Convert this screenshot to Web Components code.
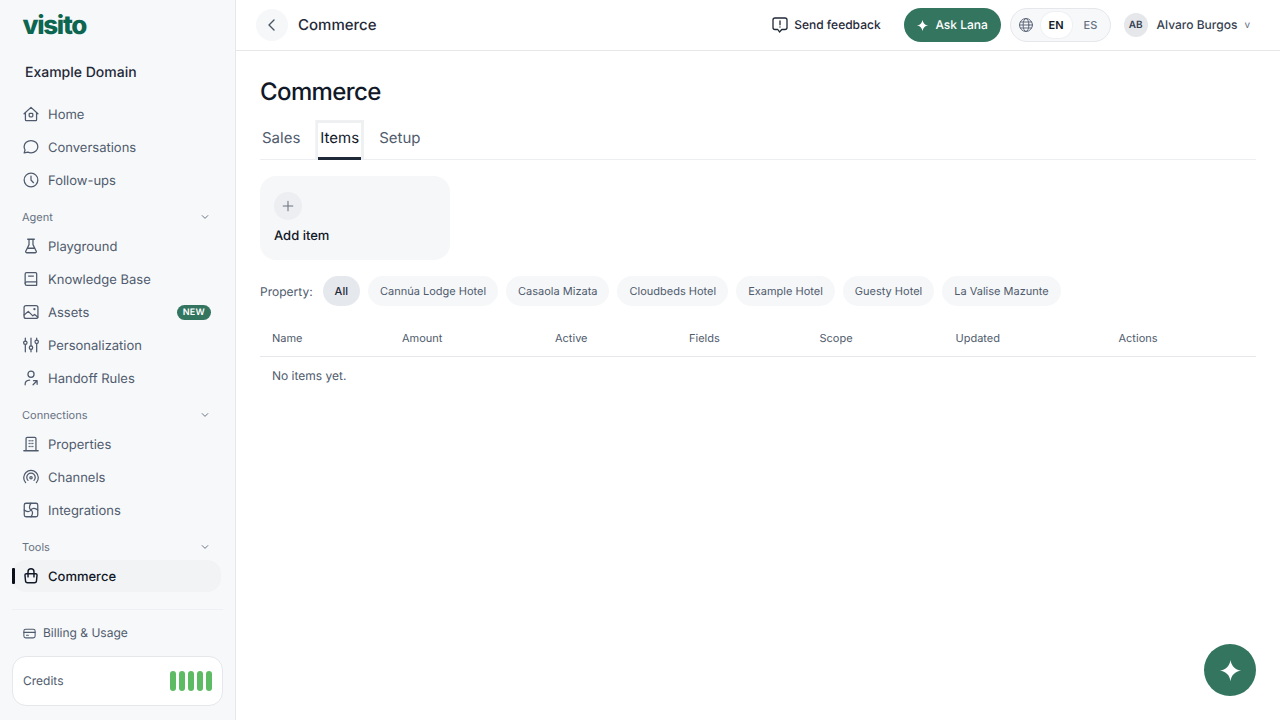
<!DOCTYPE html>
<html lang="en"><head><meta charset="utf-8"><title>Commerce</title>
<style>
html,body{margin:0;height:100%;overflow:hidden}
body{font-family:Inter,"Noto Sans",sans-serif;color:#111827;background:#fff;text-rendering:geometricPrecision}
</style></head><body>
<app-shell>
  <side-bar slot="side"></side-bar>
  <top-bar slot="top"></top-bar>
  <commerce-page slot="main"></commerce-page>
</app-shell>
<fab-button></fab-button>
<script>
const ICONS={
home:'<path d="M2.300 9.800 10 2.600l7.700 7.200M3.800 8.600V16.300a1 1 0 0 0 1 1h10.400a1 1 0 0 0 1-1V8.600"/><rect x="8" y="9.200" width="4" height="4" rx=".9"/>',
chat:'<path d="M10 2.800c4.200 0 7.600 3 7.600 6.800s-3.400 6.800-7.600 6.800c-1.200 0-2.300-.2-3.300-.7l-4.300.9 1-3.300A6.400 6.400 0 0 1 2.400 9.600c0-3.800 3.400-6.800 7.600-6.800z"/>',
clock:'<circle cx="10" cy="10" r="7.600"/><path d="M10 5.600V10l2.800 3"/>',
flask:'<path d="M6.300 2.500h7.400M7.800 2.500v6L4.200 15.800a1.100 1.100 0 0 0 1 1.700h9.600a1.100 1.100 0 0 0 1-1.700L12.200 8.500v-6M6.300 12.500h7.400"/>',
book:'<path d="M5 3h10a1.300 1.300 0 0 1 1.300 1.300V17H5.300a1.800 1.800 0 0 1-1.800-1.800V4.500A1.500 1.500 0 0 1 5 3z"/><path d="M3.500 14.800c0-1 .7-1.500 1.800-1.500h11M7.300 6.800h5.400"/>',
image:'<rect x="2.300" y="2.800" width="15.400" height="14.400" rx="2.200"/><path d="M2.300 13.300 7 9.300l5 5 2-1.500 3.700 3"/><circle cx="13.800" cy="6.800" r=".6"/>',
sliders:'<path d="M3.700 2.500v3M3.700 9.500v8M10 2.500v8.500M10 15v2.500M16.300 2.500v2M16.300 8.500v9"/><circle cx="3.700" cy="7.500" r="1.900"/><circle cx="10" cy="13" r="1.900"/><circle cx="16.300" cy="6.500" r="1.900"/>',
handoff:'<circle cx="10" cy="5.800" r="3.400"/><path d="M3.500 17.500v-.8C3.500 14 5.800 12.600 8.500 12.400M12.300 17.500l4.400-4.400M12.800 13h4v4"/>',
building:'<path d="M4.500 17.300V4a1.300 1.300 0 0 1 1.300-1.300h8.400A1.300 1.300 0 0 1 15.500 4v13.300M2 17.500h16"/><path d="M8 6.300h.01M10 6.300h.01M12 6.300h.01M8 9.500h.01M10 9.500h.01M12 9.500h.01M8 12.700h.01M10 12.700h.01M12 12.700h.01" stroke-width="1.600"/>',
signal:'<circle cx="10" cy="10.800" r="1.300"/><path d="M6.700 13.800a4.700 4.700 0 1 1 6.600 0M4 16.200a8.100 8.100 0 1 1 12 0"/>',
puzzle:'<rect x="2.500" y="2.500" width="15" height="15" rx="2"/><path d="M10 10c-2.500-1.500-2-5 0-7.500M10 10c1.500-2.500 5-2 7.500 0M10 10c2.500 1.500 2 5 0 7.500M10 10c-1.500 2.500-5 2-7.500 0"/>',
bag:'<path d="M4.800 7.500h10.400c.9 0 1.500.7 1.500 1.500l-.6 6.300a2.300 2.300 0 0 1-2.300 2.200H6.200a2.300 2.300 0 0 1-2.300-2.200L3.300 9c0-.8.600-1.500 1.500-1.500z"/><path d="M6.700 11V5.300a3.300 3.300 0 0 1 6.600 0V11"/>',
card:'<rect x="2.500" y="4.200" width="15" height="11.600" rx="2.400"/><path d="M2.500 8.500h15M6 12.300h2.600"/>',
chev:'<path d="m6 8 4 4 4-4"/>',
back:'<path d="m12 5-5 5 5 5"/>',
plus:'<path d="M10 4v12M4 10h12"/>',
feedback:'<path d="M5 3h10a2 2 0 0 1 2 2v7.500a2 2 0 0 1-2 2h-3.200L9.500 17 7.800 14.500H5a2 2 0 0 1-2-2V5a2 2 0 0 1 2-2z"/><path d="M10 6v3.800M10 12v.01"/>',
globe:'<circle cx="10" cy="10" r="7.200"/><path d="M2.800 10h14.400M3.800 6.700h12.400M3.800 13.300h12.400"/><ellipse cx="10" cy="10" rx="3.200" ry="7.200"/>',
spark:'<path fill="currentColor" stroke="none" d="M10 1.500c.7 4.800 3.700 7.800 8.500 8.500-4.800.7-7.800 3.700-8.500 8.500-.7-4.800-3.700-7.800-8.500-8.500 4.800-.7 7.800-3.700 8.500-8.500z"/>'
};
class XIcon extends HTMLElement{
  connectedCallback(){
    const s=this.getAttribute('size')||18,w=this.getAttribute('w')||1.4;
    this.attachShadow({mode:'open'}).innerHTML=`<style>:host{display:inline-flex;flex:none;width:${s}px;height:${s}px}svg{width:100%;height:100%;display:block}</style><svg viewBox="0 0 20 20" fill="none" stroke="currentColor" stroke-width="${w}" stroke-linecap="round" stroke-linejoin="round">${ICONS[this.getAttribute('name')]}</svg>`;
  }
}
customElements.define('x-icon',XIcon);

class AppShell extends HTMLElement{
  constructor(){super();this.attachShadow({mode:'open'}).innerHTML=`<style>
  :host{display:grid;grid-template-columns:236px 1fr;grid-template-rows:51px 1fr;width:1280px;height:720px}
  ::slotted([slot=side]){grid-row:1/3}
  </style><slot name="side"></slot><slot name="top"></slot><slot name="main"></slot>`}
}
customElements.define('app-shell',AppShell);

class NavItem extends HTMLElement{
  constructor(){super();const a=this.hasAttribute('active');this.attachShadow({mode:'open'}).innerHTML=`<style>
  :host{display:flex;flex:none;align-items:center;height:32px;margin:0 14px 1px 12px;padding:0 10px;gap:8px;border-radius:14px;font-size:13px;color:${a?'#111827':'#4f5b6d'};font-weight:${a?500:400};position:relative;${a?'background:#f1f3f5;':''}}
  .bar{position:absolute;left:0;top:8px;width:3px;height:16px;background:#0b0f19;border-radius:1px}
  .t{padding-top:1px}
  .new{margin-left:auto;background:#33755f;color:#fff;font-size:9px;font-weight:600;letter-spacing:.3px;height:15px;line-height:15px;padding:0 6px;border-radius:8px}
  x-icon{color:${a?'#111827':'#4f5b6d'}}
  </style>${a?'<span class="bar"></span>':''}<x-icon name="${this.getAttribute('icon')}" ${a?'w="1.6"':''}></x-icon><span class="t"><slot></slot></span>${this.hasAttribute('new')?'<span class="new">NEW</span>':''}`}
}
customElements.define('nav-item',NavItem);

class NavHead extends HTMLElement{
  constructor(){super();this.attachShadow({mode:'open'}).innerHTML=`<style>
  :host{display:flex;flex:none;align-items:center;justify-content:space-between;height:16px;margin:0 23px 0 22px;font-size:11px;color:#667181}
  x-icon{color:#667181}
  </style><span><slot></slot></span><x-icon name="chev" size="14"></x-icon>`}
}
customElements.define('nav-head',NavHead);

class SideBar extends HTMLElement{
  constructor(){super();this.attachShadow({mode:'open'}).innerHTML=`<style>
  :host{display:flex;flex-direction:column;background:#f7f8fa;border-right:1px solid #e5e7eb;box-sizing:border-box;width:236px;height:720px;overflow:hidden}
  .logo{font-size:26px;font-weight:800;letter-spacing:-1.300px;color:#0d6650;padding:9px 0 0 22.500px;line-height:34px;height:33px;flex:none}
  .dom{font-size:14px;font-weight:500;color:#1f2937;padding:1px 0 0 25px;margin-top:20px;line-height:20px;flex:none}
  .group{display:flex;flex-direction:column;flex:none}
  .g1{margin-top:15px}
  .h{margin:12px 0 5px;flex:none}
  .rule{height:1px;background:#eef0f3;margin:16px 12px 0 12px;flex:none}
  .bill{display:flex;flex:none;align-items:center;gap:6px;margin:14px 0 0 22px;font-size:12px;color:#4f5b6d;height:18px}
  .bill span{padding-bottom:2px}
  .bill x-icon{color:#4f5b6d}
  .cred{display:flex;flex:none;align-items:center;justify-content:space-between;box-sizing:border-box;margin:14px 0 0 12px;width:211px;height:50px;padding:0 10px;background:#fff;border:1px solid #e5e7eb;border-radius:14px;font-size:12px;color:#4f5b6d}
  .cred>span:first-child{padding-bottom:2px}
  .bars{display:flex;gap:3px}.bars i{width:6px;height:20px;border-radius:3px;background:#5dbb63}
  </style>
  <div class="logo">visito</div>
  <div class="dom">Example Domain</div>
  <div class="group g1">
   <nav-item icon="home">Home</nav-item><nav-item icon="chat">Conversations</nav-item><nav-item icon="clock">Follow-ups</nav-item>
  </div>
  <div class="h"><nav-head>Agent</nav-head></div>
  <div class="group">
   <nav-item icon="flask">Playground</nav-item><nav-item icon="book">Knowledge Base</nav-item><nav-item icon="image" new>Assets</nav-item><nav-item icon="sliders">Personalization</nav-item><nav-item icon="handoff">Handoff Rules</nav-item>
  </div>
  <div class="h"><nav-head>Connections</nav-head></div>
  <div class="group">
   <nav-item icon="building">Properties</nav-item><nav-item icon="signal">Channels</nav-item><nav-item icon="puzzle">Integrations</nav-item>
  </div>
  <div class="h"><nav-head>Tools</nav-head></div>
  <div class="group"><nav-item icon="bag" active>Commerce</nav-item></div>
  <div class="rule"></div>
  <div class="bill"><x-icon name="card" size="15"></x-icon><span>Billing &amp; Usage</span></div>
  <div class="cred"><span>Credits</span><span class="bars"><i></i><i></i><i></i><i></i><i></i></span></div>`}
}
customElements.define('side-bar',SideBar);

class TopBar extends HTMLElement{
  constructor(){super();this.attachShadow({mode:'open'}).innerHTML=`<style>
  :host{display:flex;align-items:center;box-sizing:border-box;height:51px;border-bottom:1px solid #e5e7eb;padding:0 30px 0 20px;background:#fff}
  .back{display:flex;align-items:center;justify-content:center;width:32px;height:32px;border-radius:50%;background:#f5f7f8;color:#4b5563}
  .title{margin-left:10px;font-size:15px;font-weight:500;color:#1f2937;padding-bottom:2px}
  .fb{margin-left:auto;display:flex;align-items:center;gap:4px;font-size:12px;font-weight:500;color:#1f2937}
  .fb span,.ask span,.name{padding-bottom:1px}
  .ask{margin-left:23px;display:flex;align-items:center;justify-content:center;gap:6px;width:97px;height:34px;border-radius:17px;background:#33755f;color:#fff;font-size:12px;font-weight:500}
  .lang{margin-left:9px;display:flex;align-items:center;box-sizing:border-box;width:101px;height:34px;border:1px solid #e5e7eb;border-radius:17px;background:#f7f8fa;padding:0 3px 0 6.500px;font-size:11px;font-weight:600}
  .lang x-icon{color:#5b6678}
  .en{margin-left:5.500px;display:flex;align-items:center;justify-content:center;width:31px;height:26px;border-radius:13px;background:#fff;box-shadow:0 0 0 1px #eef0f3;color:#111827}
  .es{margin-left:12px;color:#667181;font-weight:500}
  .av{margin-left:13px;display:flex;align-items:center;justify-content:center;width:24px;height:24px;border-radius:50%;background:#e5e7eb;color:#374151;font-size:10px;font-weight:600}
  .name{margin-left:9px;font-size:12px;font-weight:500;color:#374151}
  .v{margin-left:7px;font-size:10px;color:#667181}
  </style>
  <span class="back"><x-icon name="back" size="20" w="1.400"></x-icon></span><span class="title">Commerce</span>
  <span class="fb"><x-icon name="feedback" size="20" w="1.300"></x-icon><span>Send feedback</span></span>
  <span class="ask"><x-icon name="spark" size="13"></x-icon><span>Ask Lana</span></span>
  <span class="lang"><x-icon name="globe" size="18" w="1.100"></x-icon><span class="en">EN</span><span class="es">ES</span></span>
  <span class="av">AB</span><span class="name">Alvaro Burgos</span><span class="v">v</span>`}
}
customElements.define('top-bar',TopBar);

class FilterChip extends HTMLElement{
  constructor(){super();const a=this.hasAttribute('active');this.attachShadow({mode:'open'}).innerHTML=`<style>
  :host{display:inline-flex;align-items:center;height:30px;padding:0 12px;border-radius:15px;font-size:11px;font-weight:${a?500:400};background:${a?'#e5e8ed':'#f6f7f9'};color:${a?'#1f2937':'#4f5b6d'}}
  </style><slot></slot>`}
}
customElements.define('filter-chip',FilterChip);

class CommercePage extends HTMLElement{
  constructor(){super();this.attachShadow({mode:'open'}).innerHTML=`<style>
  :host{display:block;padding:25px 24px 0;box-sizing:border-box}
  h1{margin:0;font-size:24px;font-weight:500;letter-spacing:-.6px;line-height:32px;color:#111827}
  .tabs{display:flex;gap:16px;margin-top:15px;border-bottom:1px solid #eceef1;height:36px}
  .tab{box-sizing:border-box;height:37px;padding:0 2px 8px;display:flex;align-items:center;font-size:15px;color:#4f5b6d}
  .tab.on{color:#111827;border-bottom:3px solid #1f2937;padding-bottom:5px;outline:3px solid #eef0f2;clip-path:inset(-3px -3px 0 -3px)}
  .add{box-sizing:border-box;width:190px;height:84px;margin-top:16px;background:#f6f7f9;border-radius:16px;padding:16px 14px}
  .plus{display:flex;align-items:center;justify-content:center;width:28px;height:28px;border-radius:50%;background:#eceef1;color:#6b7280}
  .lbl{margin-top:7px;font-size:13px;font-weight:500;line-height:18px;color:#111827}
  .filters{display:flex;align-items:center;gap:8px;margin-top:16px}
  .filters .p{font-size:12px;color:#4f5b6d;margin-right:2px}
  .row{display:grid;grid-template-columns:130px 153px 134px 130.500px 136px 163px 1fr;border-bottom:1px solid #e5e7eb;margin-top:16px;height:32px;align-items:center;padding-bottom:2px;font-size:11px;color:#4f5b6d}
  .row span{padding-left:12px}
  .empty{padding:9.500px 12px;font-size:12px;line-height:18px;color:#4f5b6d}
  </style>
  <h1>Commerce</h1>
  <div class="tabs"><span class="tab">Sales</span><span class="tab on">Items</span><span class="tab">Setup</span></div>
  <div class="add"><div class="plus"><x-icon name="plus" size="16" w="1.300"></x-icon></div><div class="lbl">Add item</div></div>
  <div class="filters"><span class="p">Property:</span><filter-chip active>All</filter-chip><filter-chip>Cannúa Lodge Hotel</filter-chip><filter-chip>Casaola Mizata</filter-chip><filter-chip>Cloudbeds Hotel</filter-chip><filter-chip>Example Hotel</filter-chip><filter-chip>Guesty Hotel</filter-chip><filter-chip>La Valise Mazunte</filter-chip></div>
  <div class="row"><span>Name</span><span>Amount</span><span>Active</span><span>Fields</span><span>Scope</span><span>Updated</span><span>Actions</span></div>
  <div class="empty">No items yet.</div>`}
}
customElements.define('commerce-page',CommercePage);

class FabButton extends HTMLElement{
  constructor(){super();this.attachShadow({mode:'open'}).innerHTML=`<style>
  :host{position:fixed;right:24px;bottom:24px;display:flex;align-items:center;justify-content:center;width:52px;height:52px;border-radius:50%;background:#33755f;color:#fff}
  </style><x-icon name="spark" size="25"></x-icon>`}
}
customElements.define('fab-button',FabButton);
</script>
</body></html>
